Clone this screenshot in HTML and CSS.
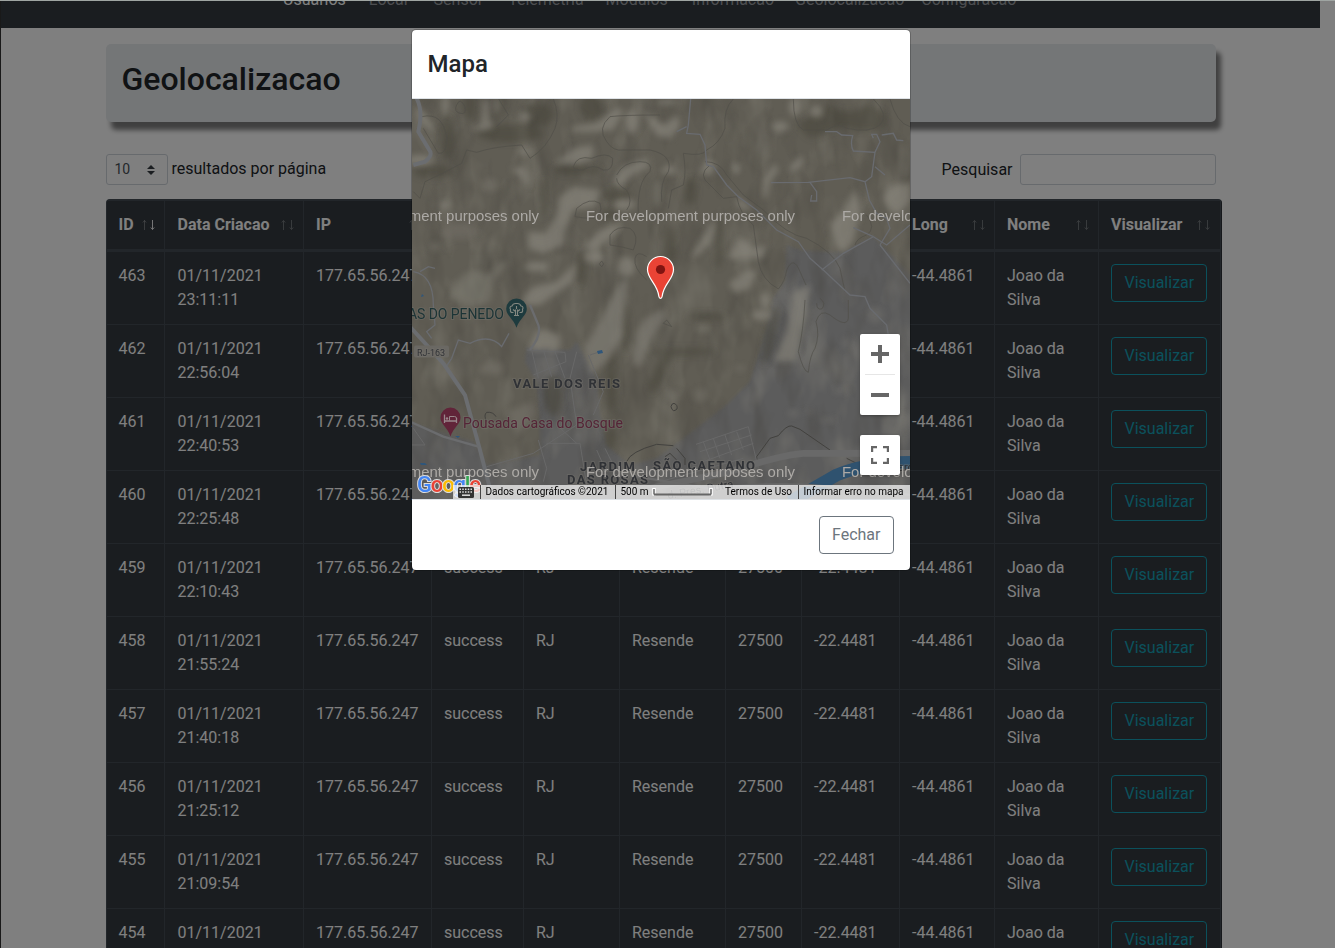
FILE: index.html
```html
<!DOCTYPE html>
<html lang="pt-BR">
<head>
<meta charset="utf-8">
<title>Geolocalizacao</title>
<link rel="stylesheet" href="styles.css">
</head>
<body>
<svg width="0" height="0" class="defs"><defs>
  <symbol id="sort" viewBox="0 0 14 12"><path d="M3.5 11V1.5M1.8 3.5L3.5 1.5L5.2 3.5" /><path d="M11.5 1v9.5M9.8 8.5L11.5 10.5L13.2 8.5" /></symbol>
  <symbol id="sort-desc" viewBox="0 0 14 12"><path d="M3.5 11V1.5M1.8 3.5L3.5 1.5L5.2 3.5" opacity=".35"/><path d="M11.5 1v9.5M9.8 8.5L11.5 10.5L13.2 8.5" /></symbol>
</defs></svg>
<div class="page">
  <nav class="navbar"><a class="active">Usuarios</a><a>Local</a><a>Sensor</a><a>Telemetria</a><a>Modulos</a><a>Informacao</a><a>Geolocalizacao</a><a>Configuracao</a></nav>
  <main class="container">
    <header class="jumbotron"><h2>Geolocalizacao</h2></header>
    <div class="controls">
      <div class="length"><span class="select">10<svg width="8" height="10" viewBox="0 0 4 5"><path fill="#343a40" d="M2 0L0 2h4zm0 5L0 3h4z"/></svg></span><span>resultados por página</span></div>
      <label class="search">Pesquisar<input type="text"></label>
    </div>
    <table class="table">
      <colgroup><col class="c-id"><col class="c-date"><col class="c-ip"><col class="c-status"><col class="c-uf"><col class="c-city"><col class="c-zip"><col class="c-lat"><col class="c-long"><col class="c-name"><col class="c-view"></colgroup>
      <thead><tr>
        <th><div>ID<svg class="sort on"><use href="#sort-desc"/></svg></div></th>
        <th><div>Data Criacao<svg class="sort"><use href="#sort"/></svg></div></th>
        <th><div>IP<svg class="sort"><use href="#sort"/></svg></div></th>
        <th></th><th></th><th></th><th></th><th></th>
        <th><div>Long<svg class="sort"><use href="#sort"/></svg></div></th>
        <th><div>Nome<svg class="sort"><use href="#sort"/></svg></div></th>
        <th><div>Visualizar<svg class="sort"><use href="#sort"/></svg></div></th>
      </tr></thead>
      <tbody>
        <tr><td>463</td><td>01/11/2021 23:11:11</td><td>177.65.56.247</td><td>success</td><td>RJ</td><td>Resende</td><td>27500</td><td>-22.4481</td><td>-44.4861</td><td>Joao da Silva</td><td><a class="btn info">Visualizar</a></td></tr>
        <tr><td>462</td><td>01/11/2021 22:56:04</td><td>177.65.56.247</td><td>success</td><td>RJ</td><td>Resende</td><td>27500</td><td>-22.4481</td><td>-44.4861</td><td>Joao da Silva</td><td><a class="btn info">Visualizar</a></td></tr>
        <tr><td>461</td><td>01/11/2021 22:40:53</td><td>177.65.56.247</td><td>success</td><td>RJ</td><td>Resende</td><td>27500</td><td>-22.4481</td><td>-44.4861</td><td>Joao da Silva</td><td><a class="btn info">Visualizar</a></td></tr>
        <tr><td>460</td><td>01/11/2021 22:25:48</td><td>177.65.56.247</td><td>success</td><td>RJ</td><td>Resende</td><td>27500</td><td>-22.4481</td><td>-44.4861</td><td>Joao da Silva</td><td><a class="btn info">Visualizar</a></td></tr>
        <tr><td>459</td><td>01/11/2021 22:10:43</td><td>177.65.56.247</td><td>success</td><td>RJ</td><td>Resende</td><td>27500</td><td>-22.4481</td><td>-44.4861</td><td>Joao da Silva</td><td><a class="btn info">Visualizar</a></td></tr>
        <tr><td>458</td><td>01/11/2021 21:55:24</td><td>177.65.56.247</td><td>success</td><td>RJ</td><td>Resende</td><td>27500</td><td>-22.4481</td><td>-44.4861</td><td>Joao da Silva</td><td><a class="btn info">Visualizar</a></td></tr>
        <tr><td>457</td><td>01/11/2021 21:40:18</td><td>177.65.56.247</td><td>success</td><td>RJ</td><td>Resende</td><td>27500</td><td>-22.4481</td><td>-44.4861</td><td>Joao da Silva</td><td><a class="btn info">Visualizar</a></td></tr>
        <tr><td>456</td><td>01/11/2021 21:25:12</td><td>177.65.56.247</td><td>success</td><td>RJ</td><td>Resende</td><td>27500</td><td>-22.4481</td><td>-44.4861</td><td>Joao da Silva</td><td><a class="btn info">Visualizar</a></td></tr>
        <tr><td>455</td><td>01/11/2021 21:09:54</td><td>177.65.56.247</td><td>success</td><td>RJ</td><td>Resende</td><td>27500</td><td>-22.4481</td><td>-44.4861</td><td>Joao da Silva</td><td><a class="btn info">Visualizar</a></td></tr>
        <tr><td>454</td><td>01/11/2021 20:54:47</td><td>177.65.56.247</td><td>success</td><td>RJ</td><td>Resende</td><td>27500</td><td>-22.4481</td><td>-44.4861</td><td>Joao da Silva</td><td><a class="btn info">Visualizar</a></td></tr>
      </tbody>
    </table>
  </main>
</div>
<div class="backdrop">
  <section class="modal">
    <h4 class="modal-header">Mapa</h4>
    <div class="map">
      <svg class="terrain" width="498" height="400" viewBox="412 99 498 400">
        <defs>
          <filter id="soft" x="-10%" y="-10%" width="120%" height="120%"><feGaussianBlur stdDeviation="9"/></filter>
          <filter id="fine" x="-10%" y="-10%" width="120%" height="120%"><feGaussianBlur stdDeviation="5"/></filter>
          <filter id="ridges" x="0" y="0" width="100%" height="100%" color-interpolation-filters="sRGB"><feTurbulence type="fractalNoise" baseFrequency=".035 .018" numOctaves="3" seed="8"/><feColorMatrix values="0 0 0 0 .56  0 0 0 0 .55  0 0 0 0 .51  2.2 0 0 0 -1.05"/></filter>
          <filter id="valleys" x="0" y="0" width="100%" height="100%" color-interpolation-filters="sRGB"><feTurbulence type="fractalNoise" baseFrequency=".04 .016" numOctaves="3" seed="21"/><feColorMatrix values="0 0 0 0 .25  0 0 0 0 .24  0 0 0 0 .22  2.2 0 0 0 -1.05"/></filter>
        </defs>
        <rect x="412" y="99" width="498" height="400" fill="#605d54"/>
        <!-- urban areas -->
        <g fill="#5b5b5c" filter="url(#fine)" transform="translate(410 95) scale(.33333)">
          <path d="M1130 450L1180 468L1300 472L1390 425L1540 580V1260H-30V975L190 1040L230 1110L390 1080V990L380 860L345 800L350 755L480 765L500 740L560 850L570 960L590 1050L660 1110L740 1090L820 1030L860 1000L950 930L1020 860L1070 700L1090 610L1125 560Z"/>
        </g>
        <path filter="url(#ridges)" opacity=".4" d="M412 99h498v400h-498z"/>
        <path filter="url(#valleys)" opacity=".4" d="M412 99h498v400h-498z"/>
        <!-- shaded relief: dark slopes -->
        <g fill="#454339" opacity=".5" filter="url(#soft)" transform="translate(410 95) scale(.33333)">
          <ellipse cx="112" cy="125" rx="20" ry="65"/><ellipse cx="180" cy="25" rx="22" ry="50"/><ellipse cx="300" cy="115" rx="100" ry="28"/><ellipse cx="385" cy="60" rx="45" ry="35"/>
          <ellipse cx="545" cy="35" rx="35" ry="38"/><ellipse cx="500" cy="225" rx="75" ry="12"/><ellipse cx="400" cy="310" rx="12" ry="60"/><ellipse cx="515" cy="520" rx="14" ry="50"/><ellipse cx="270" cy="25" rx="14" ry="40"/>
          <ellipse cx="620" cy="300" rx="40" ry="22"/><ellipse cx="600" cy="360" rx="30" ry="20"/><ellipse cx="70" cy="230" rx="60" ry="20"/>
          <path d="M1250 30Q1330 70 1370 25L1420 50L1425 95Q1380 120 1300 95L1200 130L1160 90Z"/><ellipse cx="925" cy="440" rx="12" ry="80"/><ellipse cx="780" cy="450" rx="20" ry="60"/><ellipse cx="840" cy="290" rx="20" ry="40"/>
          <ellipse cx="820" cy="770" rx="100" ry="10"/><ellipse cx="890" cy="665" rx="60" ry="10"/><ellipse cx="1080" cy="720" rx="16" ry="90" transform="rotate(12 1080 720)"/><ellipse cx="605" cy="860" rx="18" ry="100"/><ellipse cx="750" cy="830" rx="16" ry="70" transform="rotate(25 750 830)"/><ellipse cx="600" cy="1030" rx="18" ry="35"/><ellipse cx="430" cy="900" rx="30" ry="60"/><ellipse cx="645" cy="700" rx="14" ry="75"/>
        </g>
        <!-- shaded relief: lit slopes -->
        <g fill="#8b887f" opacity=".65" filter="url(#soft)" transform="translate(410 95) scale(.33333)">
          <ellipse cx="45" cy="75" rx="13" ry="40" transform="rotate(-35 45 75)"/><ellipse cx="105" cy="30" rx="10" ry="30"/><path d="M220 15h15v60l20 18q-30 20-70 8l30-15z"/><ellipse cx="345" cy="65" rx="18" ry="14"/><ellipse cx="30" cy="195" rx="40" ry="16"/><ellipse cx="262" cy="30" rx="8" ry="28"/>
          <path d="M485 95L560 85L620 35L640 50L610 105L545 110L485 110Z"/><path d="M490 160L550 150L550 190L500 208L435 205Z"/><ellipse cx="665" cy="80" rx="20" ry="35"/><ellipse cx="345" cy="170" rx="22" ry="8"/><path d="M300 220L345 215L360 280L325 240Z"/><ellipse cx="240" cy="270" rx="22" ry="20" opacity=".5"/><ellipse cx="105" cy="330" rx="14" ry="12"/>
          <path d="M610 260L640 215L710 190L715 215L660 245L630 275Z"/><path d="M440 360L450 305L490 275L570 285L555 335L490 345L465 400L460 450L400 475L355 460L355 410L405 415Z"/><ellipse cx="645" cy="328" rx="32" ry="16"/><path d="M520 460L570 405L640 385L610 420L555 465Z"/><ellipse cx="550" cy="485" rx="28" ry="18"/>
          <path d="M345 600L370 575L440 560L500 500L490 560L430 600L390 630H340Z"/><ellipse cx="380" cy="515" rx="35" ry="14"/><path d="M120 610Q140 530 200 525L240 540L260 505L300 500L255 550L240 620L190 640Z" opacity=".6"/><ellipse cx="650" cy="515" rx="25" ry="30"/><ellipse cx="150" cy="410" rx="55" ry="25" opacity=".35"/><ellipse cx="75" cy="455" rx="18" ry="14" opacity=".5"/>
          <path d="M690 40L760 90L800 60L810 90L780 130L740 120Z"/><ellipse cx="770" cy="20" rx="35" ry="8"/><path d="M745 235L780 205L805 235Z"/><path d="M865 235L890 190L915 205L905 240Z"/><ellipse cx="978" cy="220" rx="10" ry="16"/><ellipse cx="1110" cy="95" rx="25" ry="15"/><ellipse cx="1155" cy="35" rx="18" ry="28"/><ellipse cx="1220" cy="50" rx="20" ry="18"/>
          <path d="M1060 250L1095 205L1105 225L1080 260L1070 310H1060Z"/><path d="M1130 230L1160 190L1180 185L1175 220Z"/><path d="M980 305L1030 340L1000 345L980 330Z"/><ellipse cx="740" cy="295" rx="14" ry="40" opacity=".6"/><path d="M1260 385L1300 350L1335 280L1352 340L1330 440L1300 475L1275 450Z"/><path d="M1420 310Q1440 260 1500 265V320L1460 360Q1430 340 1420 310Z"/>
          <path d="M840 490L900 390L920 370L905 440L870 475Z"/><path d="M955 490L985 430L1040 460L1070 450L1060 490Z"/><path d="M957 565L1010 525L1040 530L1020 580L975 595Z"/><ellipse cx="1065" cy="615" rx="15" ry="25"/><ellipse cx="1055" cy="660" rx="28" ry="16"/>
          <path d="M1090 800L1130 710L1150 590L1200 570L1190 650L1160 800Z"/><path d="M680 710L705 670L760 640L765 670L720 740L690 820L670 800Z" opacity=".8"/><path d="M520 760L570 680L630 560L655 550L640 720L600 790L540 840Z" opacity=".8"/><path d="M355 765L390 700L450 720L450 765Z"/><path d="M290 950L370 920L380 960L320 1020Z" opacity=".5"/><path d="M200 830L240 790L280 810L270 840Z" opacity=".5"/><ellipse cx="880" cy="700" rx="18" ry="14" opacity=".6"/>
          <g opacity=".4"><ellipse cx="870" cy="900" rx="20" ry="20"/><ellipse cx="790" cy="900" rx="22" ry="16"/><ellipse cx="990" cy="820" rx="18" ry="10"/><ellipse cx="1310" cy="745" rx="12" ry="20"/><ellipse cx="1395" cy="660" rx="22" ry="24"/><ellipse cx="1290" cy="885" rx="22" ry="12"/><ellipse cx="1150" cy="955" rx="18" ry="10"/><ellipse cx="1198" cy="950" rx="8" ry="10"/><ellipse cx="1255" cy="975" rx="25" ry="9"/><ellipse cx="1480" cy="980" rx="12" ry="30"/><ellipse cx="500" cy="905" rx="18" ry="40"/></g>
        </g>
        <!-- contour lines -->
        <g class="contour" transform="translate(410 95) scale(.33333)">
          <path d="M430 12Q450 60 435 100Q410 160 360 190L335 150Q250 155 200 172L170 165L155 205Q100 235 45 260L30 310L10 290M35 65Q100 50 110 130Q110 180 85 175L40 100M140 30Q150 5 165 35Q170 60 150 55Q130 50 140 30M265 10L295 60L260 95M750 60Q640 60 600 65Q560 100 590 140Q610 170 640 165H720Q790 180 775 230Q750 260 755 320M490 215Q500 180 545 190Q590 170 608 190Q610 230 580 225Q550 205 520 225Q490 225 490 215M620 240Q640 200 690 200Q730 200 720 230Q680 260 685 360M620 250Q620 270 650 285Q670 320 650 345M500 340Q540 305 570 325Q580 360 550 370Q520 370 495 365ZM600 420Q620 390 660 400Q690 420 670 465Q640 455 600 450ZM575 498L581 507L575 515L568 507ZM710 555Q670 520 675 490Q680 465 710 485"/>
          <path d="M970 12Q940 40 945 100Q930 145 890 165Q880 185 820 175Q830 230 820 270L785 285L775 340M885 200Q930 200 950 240L1000 300L1060 345Q1130 420 1190 430Q1270 470 1290 520L1305 590M900 210Q860 240 900 270L940 310L980 305Q990 360 1030 390L1045 500Q1055 555 1105 582Q1125 560 1130 525Q1150 480 1170 530L1188 570M1150 12Q1150 90 1180 105L1250 105Q1290 80 1310 100Q1380 115 1410 90Q1440 60 1390 12M1440 12Q1460 85 1500 95M1335 450Q1340 430 1370 420Q1400 400 1370 360M1165 770Q1180 830 1195 832Q1200 780 1215 760Q1230 720 1218 680Q1230 640 1260 660Q1310 700 1315 670V615M1165 770Q1180 710 1185 615M1220 625Q1220 645 1235 642Q1250 625 1230 610M760 685L770 675L785 695Z"/>
          <path class="strong" d="M792 925Q804 930 801 942Q788 955 783 935Q785 925 792 925ZM230 980Q220 960 230 952Q250 950 258 965M650 1100Q660 1070 740 1048L790 1052M800 1060L825 1090V1110M765 1085L780 1075L800 1095M1042 1110L1040 1085L1080 1030L1105 1022Q1130 990 1145 993L1170 1003L1260 1065M1310 1090L1340 1105"/>
        </g>
        <!-- roads -->
        <g class="road" transform="translate(410 95) scale(.33333)">
          <path d="M842 12L835 90L830 115L870 118L885 150L890 210L910 215L950 270L985 305L1040 345L1100 405L1165 440L1200 490L1240 525L1320 600L1365 605L1380 640L1430 690L1435 720M1235 525L1300 475L1390 425L1430 450L1500 390M1390 425L1330 398M1410 450L1500 565M1083 263L1195 262L1320 248L1365 260L1385 245L1395 172L1330 168Q1320 150 1328 122L1295 120L1280 110H1245M1200 262L1220 290V318H1202L1205 300M1365 260L1378 315L1400 355L1430 370L1440 400L1410 450M1395 172L1410 140L1400 118H1385L1390 130M1415 120L1450 115L1460 135L1480 137M1395 215L1425 240M800 110L830 95"/>
          <path d="M10 530Q70 540 70 630L75 690L50 710L65 730M30 530L55 515L75 520M105 820L125 790L145 735L180 745Q240 715 275 755L297 715"/>
          <path class="street" d="M350 765L465 772L468 800L370 840M365 765L385 850M400 765L425 845M435 770L465 850M500 770L480 850L500 990L370 1075L230 1115M385 1035L410 1120L400 1160M410 1045L510 1045L530 1170M500 1045L440 990M535 780L580 890L550 960M540 780L570 770M560 1065L580 1110M585 1060L605 1100M10 1000L45 1050H0M750 1160L860 1130L1000 1090"/>
          <path class="street" d="M858 1048L1015 995L1045 1120M880 1100L1030 1045M870 1070L1025 1020M880 1040L900 1095M910 1030L930 1090M945 1020L965 1080M980 1010L1000 1065"/>
        </g>
        <g fill="none" transform="translate(410 95) scale(.33333)">
          <path stroke="#6b6d70" stroke-width="12" d="M20 10Q40 50 25 110L58 165Q70 180 45 200L10 210M0 695L100 805L165 900L210 1065L250 1220"/><path stroke="#6b6c6e" stroke-width="7" d="M0 980L100 1025L205 1055M360 630L385 690Q395 720 360 765"/>
          <path stroke="#696969" stroke-width="20" d="M720 1180L960 1130Q1110 1080 1180 1075H1500"/>
          <path stroke="#2f526f" stroke-width="38" d="M1140 1220L1280 1140Q1370 1102 1500 1102"/><path stroke="#6a6a6a" stroke-width="7" d="M680 1145L900 1180Q1100 1160 1260 1175L1500 1200"/>
        </g>
        <g fill="#2f567a"><path d="M597 351l5-1 1 3-5 1zM422 294l2 2-3 1zM420 463h5l2 2h-6zM455 436h5l-2 2z"/></g>
        <!-- place names -->
        <rect x="414" y="345.500" width="35" height="12" rx="2" fill="#6a6863"/>
        <g class="place">
          <text x="417" y="355.500" font-size="9" textLength="28">RJ-163</text>
          <text x="513" y="387.500" font-size="13" font-weight="700" textLength="107">VALE DOS REIS</text>
          <text x="580" y="470.500" font-size="13" font-weight="700" textLength="55">JARDIM</text>
          <text x="567" y="483.500" font-size="13" font-weight="700" textLength="81">DAS ROSAS</text>
          <text x="653" y="469.500" font-size="13" font-weight="700" textLength="102">SÃO CAETANO</text>
          <text x="668" y="499" font-size="11" textLength="67" transform="rotate(-10 668 499)">d. Pres. Dutra</text>
          <text x="898" y="471" font-size="11">aro</text><text x="888" y="497" font-size="12" opacity=".3">NO</text>
        </g>
        <text class="halo" x="408" y="319" font-size="14" fill="#1c3436" textLength="96">AS DO PENEDO</text>
        <text class="halo" x="463" y="428" font-size="14" fill="#552537" textLength="160">Pousada Casa do Bosque</text>
        <!-- place pins -->
        <path fill="#1e3b3e" d="M516.500 298.500a10.300 10.300 0 0 1 10.300 10.300c0 7-7.200 9.500-10.300 19c-3.100-9.500-10.300-12-10.300-19a10.300 10.300 0 0 1 10.300-10.300z"/>
        <path fill="none" stroke="#838780" stroke-width="1.100" d="M513.500 312.500q-4 .5-3-3q-1.500-3 1.500-3.500q1-3 4.500-2.500q3.500-.5 4.500 2.500q3 .5 1.500 3.500q1 3.500-3 3M515.500 315.500v-6M517.500 315.500v-6M515.500 311.500l-2.500-2M517.500 311.500l2.500-2M516.500 309v-3M514 315.500h5"/>
        <path fill="#612439" d="M450.500 407.500a10 10 0 0 1 10 10c0 7-7 9.500-10 19c-3-9.500-10-12-10-19a10 10 0 0 1 10-10z"/>
        <path fill="none" stroke="#99868b" stroke-width="1.300" d="M444.500 414.500v8.500M456.500 418v5M444.500 421h12"/><path fill="none" stroke="#99868b" d="M449.500 420.500v-4h5q2 0 2 2v2"/><circle cx="447" cy="418.500" r="1.200" fill="#99868b"/>
        <g class="watermark"><text x="330" y="221" textLength="209" lengthAdjust="spacingAndGlyphs">For development purposes only</text><text x="586" y="221" textLength="209" lengthAdjust="spacingAndGlyphs">For development purposes only</text><text x="842" y="221" textLength="209" lengthAdjust="spacingAndGlyphs">For development purposes only</text><text x="330" y="477" textLength="209" lengthAdjust="spacingAndGlyphs">For development purposes only</text><text x="586" y="477" textLength="209" lengthAdjust="spacingAndGlyphs">For development purposes only</text><text x="842" y="477" textLength="209" lengthAdjust="spacingAndGlyphs">For development purposes only</text></g>
        <path fill="#ea4335" stroke="#fff" stroke-width="1.200" d="M660.500 256.500a13 13 0 0 1 13 13c0 10-10 14-11.400 27q-.3 1.800-1.600 1.800t-1.600-1.800c-1.400-13-11.400-17-11.400-27a13 13 0 0 1 13-13z"/><circle cx="660.500" cy="269.500" r="4.600" fill="#811411"/>
        <!-- Google wordmark -->
        <g class="google"><text x="417" y="492" textLength="64"><tspan fill="#4285f4">G</tspan><tspan fill="#ea4335">o</tspan><tspan fill="#fbbc05">o</tspan><tspan fill="#4285f4">g</tspan><tspan fill="#34a853">l</tspan><tspan fill="#ea4335">e</tspan></text></g>
      </svg>
      <div class="map-controls">
        <div class="zoom"><svg width="40" height="40"><path stroke="#666" stroke-width="4" d="M11 20h18M20 11v18"/></svg><i></i><svg width="40" height="40"><path stroke="#666" stroke-width="4" d="M11 20h18"/></svg></div>
        <div class="full"><svg width="40" height="40"><path fill="none" stroke="#666" stroke-width="2.200" d="M12.100 17v-4.900H17M23 12.100h4.900V17M27.900 23v4.900H23M17 27.900h-4.900V23"/></svg></div>
      </div>
      <div class="attribution">
        <span class="keys"><svg width="16" height="11"><rect width="16" height="11" rx="1.500" fill="#333"/><path stroke="#ddd" stroke-width="1.500" stroke-dasharray="1.500 1.250" d="M1.500 2.300h13M1.500 5h13"/><path stroke="#ddd" stroke-width="1.500" d="M4 8.200h8"/></svg></span>
        <span class="data">Dados cartográficos ©2021</span>
        <span class="scale">500 m<svg width="61" height="8"><path fill="none" stroke="#fff" stroke-width="3.500" d="M2 0v7.500M59 0v7.500"/><path fill="none" stroke="#666" stroke-width="1.500" d="M2 1v5.500M59 1v5.500"/><path stroke="#666" stroke-width="2" d="M2 6.500h57"/></svg></span>
        <span class="terms">Termos de Uso</span>
        <span class="report">Informar erro no mapa</span>
      </div>
    </div>
    <footer class="modal-footer"><a class="btn secondary">Fechar</a></footer>
  </section>
</div>
</body>
</html>
```
FILE: styles.css
```css
* { box-sizing: border-box; }
body { margin: 0; height: 948px; overflow: hidden; background: #fff; color: #212529; font: 16px/24px Roboto, sans-serif; position: relative; }
.defs { position: absolute; }
.page { height: 948px; overflow: hidden; border-left: 1px solid #333; padding-right: 15px; }
.navbar { height: 28px; background: #343a40; padding-left: 282px; display: flex; gap: 24px; color: #9a9da0; overflow: hidden; }
.navbar a { margin-top: -12px; }
.navbar a:nth-child(2) { margin-left: -1px; margin-right: 2px; }
.navbar a:nth-child(3) { margin-right: 1px; }
.navbar a:nth-child(4) { margin-right: -2px; }
.navbar a:nth-child(6) { margin-right: -3px; }
.navbar a:nth-child(7) { margin-right: -7px; }
.navbar .active { color: #fff; }
.container { width: 1110px; margin: 16px 0 0 105px; }
.jumbotron { height: 78px; padding: 16px 15.5px; border-radius: 5px; background: #e9ecef; box-shadow: 5px 8px 5px rgba(0, 0, 0, .5); }
.jumbotron h2 { margin: 0; font-size: 32px; line-height: 38px; font-weight: 500; }
.controls { display: flex; justify-content: space-between; margin-top: 32px; height: 31px; }
.length { display: flex; gap: 3.5px; line-height: 29px; }
.select { width: 62px; height: 31px; border: 1px solid #ced4da; border-radius: 3px; padding: 0 12px 0 7.5px; font-size: 14px; color: #495057; display: flex; align-items: center; justify-content: space-between; }
.search { display: flex; gap: 7.5px; line-height: 31px; }
.search input { width: 196px; height: 31px; border: 1px solid #ced4da; border-radius: 3px; background: transparent; }
.table { table-layout: fixed; width: 1116px; margin-top: 14px; border-collapse: separate; border-spacing: 0; border: 1px solid #454d55; border-right-color: #2c3136; border-radius: 4px; background: #343a40; color: #fff; }
.c-id { width: 58px; } .c-date { width: 139px; } .c-ip { width: 128px; } .c-status { width: 92px; } .c-uf { width: 96px; } .c-city { width: 106px; } .c-zip { width: 76px; } .c-lat { width: 98px; } .c-long { width: 95px; } .c-name { width: 104px; } .c-view { width: 122px; }
.table th, .table td { padding: 12px; border: 0 solid #454d55; border-width: 1px 1px 0 0; text-align: left; vertical-align: top; }
.table th:first-child, .table td:first-child { padding-left: 11.5px; }
.table th:nth-child(2), .table td:nth-child(2) { padding-left: 12.5px; }
.table th { border-bottom-width: 2px; height: 51px; font-weight: 700; }
.table td { height: 73px; padding-bottom: 0; }
.table th div { display: flex; justify-content: space-between; align-items: center; white-space: nowrap; margin-right: -3px; }
.table th:last-child div { margin-right: -2px; }
.sort { width: 14px; height: 12px; fill: none; stroke: #fff; stroke-width: 1; opacity: .3; flex: none; }
.sort.on { opacity: .9; }
.btn { display: inline-block; height: 38px; padding: 6px 12px; border: 1px solid; border-radius: 4px; line-height: 24px; }
.btn.info { color: #17a2b8; display: block; width: 96px; padding-left: 12.5px; }
.btn.secondary { color: #6c757d; width: 75px; }
.backdrop { position: absolute; inset: 0; background: rgba(0, 0, 0, .5); border-top: 1px solid #9fa5a2; display: flex; align-items: flex-start; padding: 28px 0 0 411px; }
.modal { width: 500px; border: 1px solid rgba(0, 0, 0, .2); border-radius: 5px; background: #fff; background-clip: padding-box; overflow: hidden; }
.modal-header { margin: 0; padding: 16px 15.5px; height: 69px; border-bottom: 1px solid #dee2e6; font-size: 24px; line-height: 36px; font-weight: 500; }
.map { position: relative; width: 498px; height: 400px; overflow: hidden; }
.terrain { display: block; }
.contour { fill: none; stroke: #504e49; stroke-width: 2; }
.contour .strong { stroke: #42413e; stroke-width: 3; }
.road { fill: none; stroke: #696b6f; stroke-width: 4; }
.road .street { stroke: #686868; stroke-width: 3; }
.place { fill: #303236; font-family: Roboto, sans-serif; }
.place text, .halo { paint-order: stroke; stroke: rgba(120, 118, 113, .35); stroke-width: 2px; }
.halo { font-family: Roboto, sans-serif; }
.watermark { fill: #adaaa6; font: 15px "Liberation Sans", sans-serif; }
.google { font: 500 22px Roboto, sans-serif; }
.google text { paint-order: stroke; stroke: #ddd; stroke-width: 2px; }
.map-controls { position: absolute; right: 10px; top: 235px; display: grid; gap: 20px; }
.zoom, .full { width: 40px; background: #fff; border-radius: 2px; box-shadow: 0 1px 3px rgba(0, 0, 0, .3); }
.zoom svg, .full svg { display: block; }
.zoom i { display: block; height: 1px; margin: 0 5px; background: #e6e6e6; }
.attribution { position: absolute; left: 41px; right: 0; bottom: 0; height: 14px; display: grid; grid-template-columns: 27px 135px 104px 79px 112px; background: rgba(245, 245, 245, .75); color: #000; font-size: 10px; line-height: 14px; white-space: nowrap; }
.attribution span + span { border-left: 1px solid #444; padding-left: 4.5px; }
.attribution .keys { padding: 2px 0 0 5px; line-height: 0; }
.scale { display: flex; gap: 3px; align-items: center; }
.attribution .terms { border-left: 0; padding-left: 6px; }
.modal-footer { height: 71px; border-top: 1px solid #dee2e6; padding: 16px; display: flex; justify-content: flex-end; }
```
